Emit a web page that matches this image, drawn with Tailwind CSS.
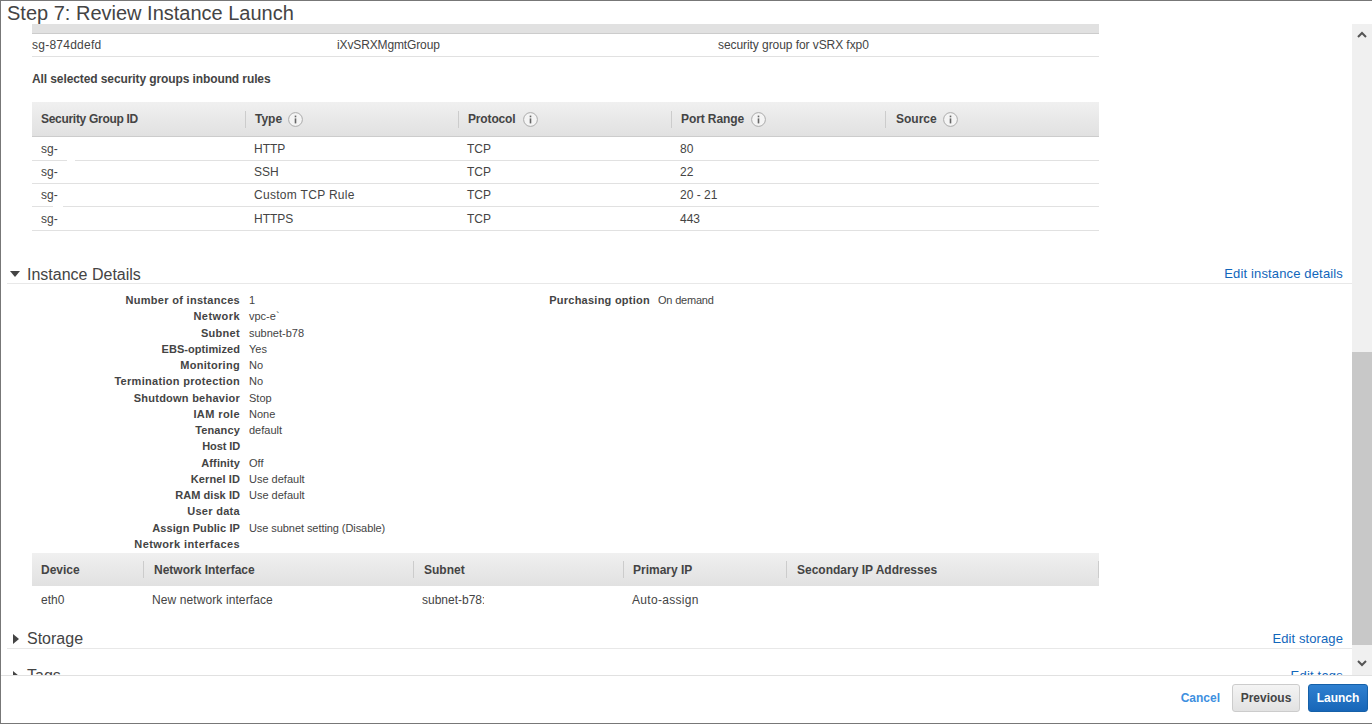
<!DOCTYPE html>
<html>
<head>
<meta charset="utf-8">
<script src="https://cdn.jsdelivr.net/npm/@tailwindcss/browser@4"></script>
</head>
<body class="m-0 bg-white">
<div class="h-[724px] w-[1372px] flex flex-col overflow-hidden border-t border-l border-b border-[#777] font-['Liberation_Sans',Arial,sans-serif] text-[12px] text-[#444]">
  <div class="h-[23px] shrink-0 pl-[6px] text-[20px] leading-[25px] text-[#444]">Step 7: Review Instance Launch</div>
  <div class="h-[651px] shrink-0 flex">
    <div class="w-[1351px] shrink-0 overflow-hidden">
      <div class="ml-[31px] w-[1067px]">
        <div class="h-[10px] bg-[#e1e1e1] border-b border-[#ccc]"></div>
        <div class="h-[23px] grid grid-cols-[305px_381px_1fr] items-center border-b border-[#e1e1e1]"><span class="tracking-[0.25px]">sg-874ddefd</span><span class="tracking-[-0.13px]">iXvSRXMgmtGroup</span><span class="tracking-[-0.07px]">security group for vSRX fxp0</span></div>
        <div class="mt-[15px] h-[14px] leading-[14px] font-bold tracking-[-0.1px]">All selected security groups inbound rules</div>
        <div class="mt-[16px] h-[35px] grid grid-cols-[213px_213px_213px_214px_1fr] items-center border-b border-[#ccc] bg-gradient-to-b from-[#f0f0f0] to-[#e1e1e1] font-bold">
          <div class="pl-[9px] tracking-[-0.3px]">Security Group ID</div>
          <div class="pl-[9px] h-[17px] leading-[17px] flex items-center gap-[6px] border-l border-[#ccc]">Type <svg class="w-[15px] h-[15px]" viewBox="0 0 15 15"><circle cx="7.5" cy="7.5" r="6.9" fill="#f4f4f4" stroke="#aaa"/><rect x="6.7" y="6.4" width="1.6" height="5" fill="#666"/><rect x="6.7" y="3.6" width="1.6" height="1.7" fill="#666"/></svg></div>
          <div class="pl-[9px] h-[17px] leading-[17px] flex items-center gap-[8px] border-l border-[#ccc]"><span class="tracking-[-0.15px]">Protocol</span> <svg class="w-[15px] h-[15px]" viewBox="0 0 15 15"><circle cx="7.5" cy="7.5" r="6.9" fill="#f4f4f4" stroke="#aaa"/><rect x="6.7" y="6.4" width="1.6" height="5" fill="#666"/><rect x="6.7" y="3.6" width="1.6" height="1.7" fill="#666"/></svg></div>
          <div class="pl-[9px] h-[17px] leading-[17px] flex items-center gap-[7px] border-l border-[#ccc]"><span class="tracking-[-0.1px]">Port Range</span> <svg class="w-[15px] h-[15px]" viewBox="0 0 15 15"><circle cx="7.5" cy="7.5" r="6.9" fill="#f4f4f4" stroke="#aaa"/><rect x="6.7" y="6.4" width="1.6" height="5" fill="#666"/><rect x="6.7" y="3.6" width="1.6" height="1.7" fill="#666"/></svg></div>
          <div class="pl-[10px] h-[17px] leading-[17px] flex items-center gap-[6px] border-l border-[#ccc]">Source <svg class="w-[15px] h-[15px]" viewBox="0 0 15 15"><circle cx="7.5" cy="7.5" r="6.9" fill="#f4f4f4" stroke="#aaa"/><rect x="6.7" y="6.4" width="1.6" height="5" fill="#666"/><rect x="6.7" y="3.6" width="1.6" height="1.7" fill="#666"/></svg></div>
        </div>
        <div class="relative h-[24px] grid grid-cols-[213px_213px_213px_1fr] items-center border-b border-[#e1e1e1] pl-[9px]"><span>sg-</span><span>HTTP</span><span>TCP</span><span>80</span><span class="absolute left-[35px] bottom-[-1px] w-[8px] h-[1px] bg-white"></span></div>
        <div class="h-[23px] grid grid-cols-[213px_213px_213px_1fr] items-center border-b border-[#e1e1e1] pl-[9px]"><span>sg-</span><span>SSH</span><span>TCP</span><span>22</span></div>
        <div class="relative h-[23px] grid grid-cols-[213px_213px_213px_1fr] items-center border-b border-[#e1e1e1] pl-[9px]"><span>sg-</span><span class="tracking-[0.3px]">Custom TCP Rule</span><span>TCP</span><span>20 - 21</span><span class="absolute left-[21px] bottom-[-1px] w-[10px] h-[1px] bg-white"></span></div>
        <div class="h-[24px] grid grid-cols-[213px_213px_213px_1fr] items-center border-b border-[#e1e1e1] pl-[9px]"><span>sg-</span><span>HTTPS</span><span>TCP</span><span>443</span></div>
      </div>

      <div class="mt-[30px] ml-[6px] h-[23px] flex items-end border-b border-[#e8e8e8] pr-[9px]">
        <svg class="w-[10px] h-[6px] ml-[3px] mr-[7px] mb-[6px]" viewBox="0 0 10 6"><path d="M0 0H10L5 6Z" fill="#444"/></svg>
        <span class="text-[16px] leading-[16px] pb-[0px]">Instance Details</span>
        <a class="ml-auto text-[13px] leading-[18px] text-[#1166bb] tracking-[0.15px]">Edit instance details</a>
      </div>
      <div class="mt-[8px] ml-[6px] text-[11px] leading-[16.25px]">
        <div class="flex h-[16.25px]"><b class="w-[233px] text-right tracking-[0.3px]">Number of instances</b><span class="w-[285px] pl-[9px]">1</span><b class="w-[125px] text-right tracking-[0.25px]">Purchasing option</b><span class="pl-[8px] tracking-[-0.2px]">On demand</span></div>
        <div class="flex h-[16.25px]"><b class="w-[233px] text-right tracking-[0.45px]">Network</b><span class="pl-[9px]">vpc-e`</span></div>
        <div class="flex h-[16.25px]"><b class="w-[233px] text-right tracking-[0.3px]">Subnet</b><span class="pl-[9px]">subnet-b78</span></div>
        <div class="flex h-[16.25px]"><b class="w-[233px] text-right tracking-[0.07px]">EBS-optimized</b><span class="pl-[9px]">Yes</span></div>
        <div class="flex h-[16.25px]"><b class="w-[233px] text-right tracking-[0.3px]">Monitoring</b><span class="pl-[9px]">No</span></div>
        <div class="flex h-[16.25px]"><b class="w-[233px] text-right tracking-[0.3px]">Termination protection</b><span class="pl-[9px]">No</span></div>
        <div class="flex h-[16.25px]"><b class="w-[233px] text-right tracking-[0.25px]">Shutdown behavior</b><span class="pl-[9px]">Stop</span></div>
        <div class="flex h-[16.25px]"><b class="w-[233px] text-right tracking-[0.4px]">IAM role</b><span class="pl-[9px]">None</span></div>
        <div class="flex h-[16.25px]"><b class="w-[233px] text-right tracking-[0.15px]">Tenancy</b><span class="pl-[9px]">default</span></div>
        <div class="flex h-[16.25px]"><b class="w-[233px] text-right tracking-[-0.1px]">Host ID</b></div>
        <div class="flex h-[16.25px]"><b class="w-[233px] text-right tracking-[0.1px]">Affinity</b><span class="pl-[9px]">Off</span></div>
        <div class="flex h-[16.25px]"><b class="w-[233px] text-right tracking-[0.1px]">Kernel ID</b><span class="pl-[9px]">Use default</span></div>
        <div class="flex h-[16.25px]"><b class="w-[233px] text-right tracking-[0.05px]">RAM disk ID</b><span class="pl-[9px]">Use default</span></div>
        <div class="flex h-[16.25px]"><b class="w-[233px] text-right tracking-[0.3px]">User data</b></div>
        <div class="flex h-[16.25px]"><b class="w-[233px] text-right tracking-[0.1px]">Assign Public IP</b><span class="pl-[9px] tracking-[-0.07px]">Use subnet setting (Disable)</span></div>
        <div class="flex h-[16.25px]"><b class="w-[233px] text-right tracking-[0.4px]">Network interfaces</b></div>
      </div>
      <div class="ml-[31px] w-[1067px]">
        <div class="mt-[1px] h-[33px] grid grid-cols-[111px_270px_210px_163px_1fr] items-center bg-gradient-to-b from-[#f0f0f0] to-[#e1e1e1] font-bold">
          <div class="pl-[9px]">Device</div>
          <div class="pl-[10px] h-[17px] leading-[19px] border-l border-[#ccc]">Network Interface</div>
          <div class="pl-[10px] h-[17px] leading-[19px] border-l border-[#ccc]">Subnet</div>
          <div class="pl-[9px] h-[17px] leading-[19px] border-l border-[#ccc]">Primary IP</div>
          <div class="pl-[10px] h-[17px] leading-[19px] border-l border-r border-[#ccc]">Secondary IP Addresses</div>
        </div>
        <div class="h-[28px] grid grid-cols-[111px_270px_210px_1fr] items-center pl-[9px]"><span>eth0</span><span class="tracking-[0.1px]">New network interface</span><span class="w-[62px] overflow-hidden whitespace-nowrap">subnet-b78:</span><span class="tracking-[0.3px]">Auto-assign</span></div>
      </div>
      <div class="mt-[15px] ml-[6px] h-[20px] flex items-end border-b border-[#e8e8e8] pr-[9px]">
        <svg class="w-[6px] h-[10px] ml-[6px] mr-[8px] mb-[4px]" viewBox="0 0 6 10"><path d="M0 0V10L6 5Z" fill="#444"/></svg>
        <span class="text-[16px] leading-[18px]">Storage</span>
        <a class="ml-auto text-[13px] leading-[18px] text-[#1166bb] tracking-[0.1px]">Edit storage</a>
      </div>
      <div class="mt-[17px] ml-[6px] h-[20px] flex items-center pr-[9px]">
        <svg class="w-[6px] h-[10px] ml-[6px] mr-[8px]" viewBox="0 0 6 10"><path d="M0 0V10L6 5Z" fill="#444"/></svg>
        <span class="text-[16px]">Tags</span>
        <a class="ml-auto text-[13px] text-[#1166bb] tracking-[0.2px]">Edit tags</a>
      </div>
    </div>
    <div class="w-[20px] shrink-0 bg-[#f0f0f0] flex flex-col">
      <div class="h-[20px] flex items-center justify-center"><svg class="w-[10px] h-[7px]" viewBox="0 0 10 7"><path d="M1 6L5 2L9 6" fill="none" stroke="#555" stroke-width="2"/></svg></div>
      <div class="mt-[308px] h-[293px] bg-[#c8c8c8]"></div>
      <div class="h-[30px] pt-[7px] flex items-center justify-center"><svg class="w-[10px] h-[7px]" viewBox="0 0 10 7"><path d="M1 1L5 5L9 1" fill="none" stroke="#555" stroke-width="2"/></svg></div>
    </div>
  </div>
  <div class="flex-1 border-t border-[#e1e1e1] flex items-center justify-end pr-[4px] pb-[4px] gap-[8px]">
    <a class="mr-[4px] text-[#3d8fe0] font-bold">Cancel</a>
    <button class="w-[68px] h-[28px] rounded-[3px] border border-[#ccc] bg-gradient-to-b from-[#f4f4f4] to-[#e2e2e2] font-bold text-[#444]">Previous</button>
    <button class="w-[60px] h-[28px] rounded-[3px] border border-[#1560a8] bg-gradient-to-b from-[#2f80d0] to-[#1766b8] font-bold text-white">Launch</button>
  </div>
</div>
</body>
</html>
